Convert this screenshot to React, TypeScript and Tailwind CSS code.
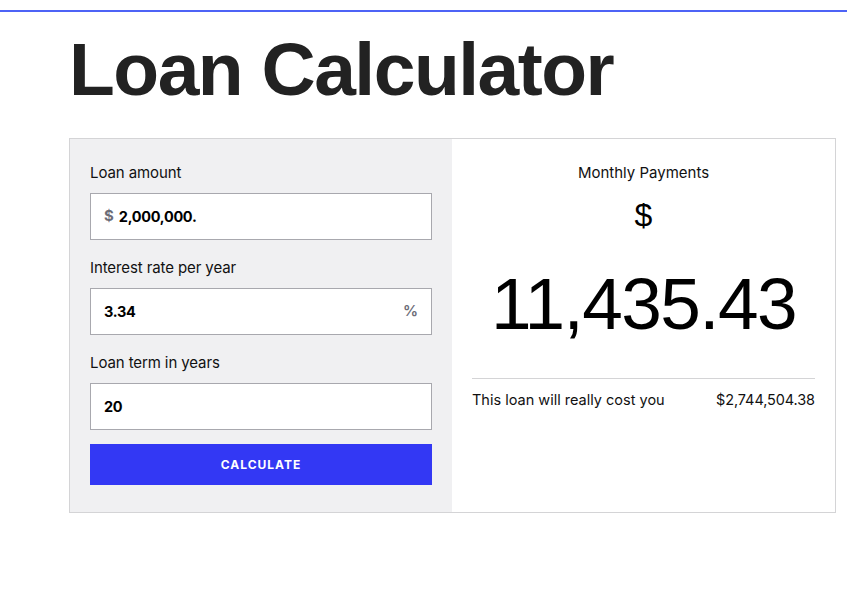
import React from "react";

const sans = "font-['Inter','Liberation_Sans',sans-serif]";
const arial = "font-['Liberation_Sans','Arial',sans-serif]";

interface FieldProps {
  label: string;
  value: string;
  prefix?: string;
  suffix?: string;
  last?: boolean;
}

function Field({ label, value, prefix, suffix, last }: FieldProps) {
  return (
    <div className={last ? "" : "mb-[18px]"}>
      <label className="block text-[15px] leading-5 text-[#111] tracking-[-0.1px] mb-[10px]">{label}</label>
      <div className="flex items-center h-[47px] bg-white border border-[#a8a8ae] px-[13px]">
        {prefix && <span className="text-[15px] font-bold text-[#6d6d78] mr-[5px]">{prefix}</span>}
        <span className="flex-1 text-[14.5px] font-bold text-black tracking-[-0.3px]">{value}</span>
        {suffix && <span className="text-[15px] font-semibold text-[#6d6d78]">{suffix}</span>}
      </div>
    </div>
  );
}

export default function App() {
  return (
    <div className={`min-h-[591px] bg-white ${sans}`}>
      <div className="h-[2px] mt-[10px] bg-[#4d63f6]" />
      <div className="pl-[69px]">
        <h1 className={`${arial} mt-[20px] mb-[31px] text-[75px] leading-[75px] font-bold text-[#222] tracking-[-1.5px]`}>
          Loan Calculator
        </h1>
        <div className="w-[767px] grid grid-cols-[382px_1fr] border border-[#d4d4d6]">
          <div className="bg-[#f0f0f2] pt-[24px] px-[20px] pb-[27px]">
            <Field label="Loan amount" prefix="$" value="2,000,000." />
            <Field label="Interest rate per year" value="3.34" suffix="%" />
            <Field label="Loan term in years" value="20" last />
            <button
              type="button"
              className="mt-[14px] w-full h-[41px] bg-[#3338f4] text-white text-[12px] font-bold tracking-[1px]"
            >
              CALCULATE
            </button>
          </div>
          <div className="bg-white pt-[24px] px-[20px] flex flex-col items-center">
            <div className="text-[15px] leading-5 text-[#111]">Monthly Payments</div>
            <div className={`${arial} mt-[14px] text-[32px] leading-[37px] text-black`}>$</div>
            <div className={`${arial} mt-[33px] text-[73px] leading-[73px] text-black tracking-[-1.6px]`}>
              11,435.43
            </div>
            <div className="mt-[38px] w-full border-t border-[#d4d4d6] pt-[11px] flex justify-between text-[14.5px] leading-5 text-[#111]">
              <span>This loan will really cost you</span>
              <span className="tracking-[-0.1px]">$2,744,504.38</span>
            </div>
          </div>
        </div>
      </div>
    </div>
  );
}
